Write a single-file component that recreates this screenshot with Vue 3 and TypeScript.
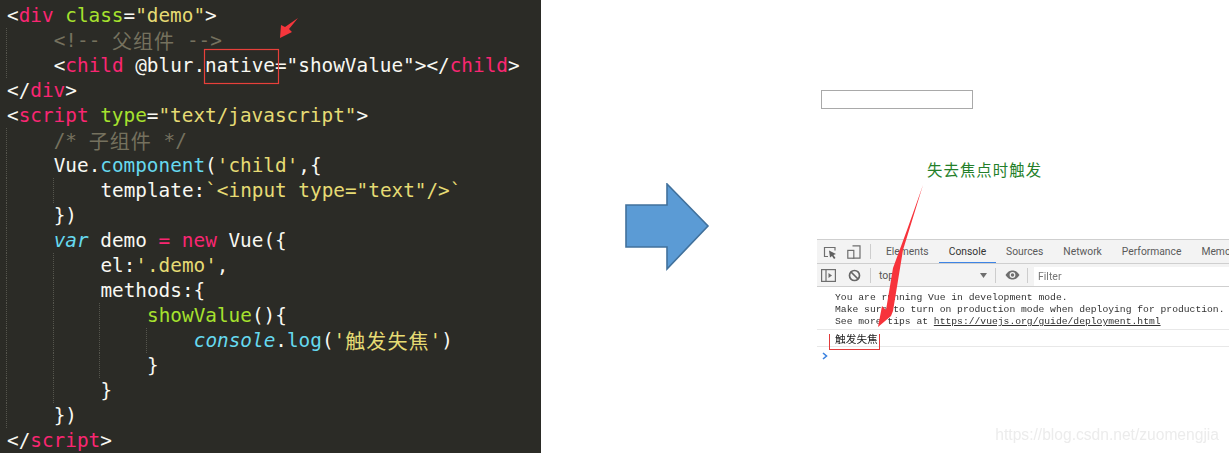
<script setup lang="ts">
type Token = [string, string?];
interface CodeLine { guides: boolean[]; tokens: Token[] }

const p = 'punct', t = 'tag', a = 'attr', s = 'str', c = 'comment', f = 'fn', i = 'ital';

const lines: CodeLine[] = [
  { guides: [], tokens: [['<', p], ['div', t], [' '], ['class', a], ['=', p], ['"demo"', s], ['>', p]] },
  { guides: [true], tokens: [['<!-- ', c], ['父组件', c + ' cjk'], [' -->', c]] },
  { guides: [true], tokens: [['<', p], ['child', t], [' @blur.native="showValue"', p], ['>', p], ['</', p], ['child', t], ['>', p]] },
  { guides: [], tokens: [['</', p], ['div', t], ['>', p]] },
  { guides: [], tokens: [['<', p], ['script', t], [' '], ['type', a], ['=', p], ['"text/javascript"', s], ['>', p]] },
  { guides: [true], tokens: [['/* ', c], ['子组件', c + ' cjk'], [' */', c]] },
  { guides: [true], tokens: [['Vue.', p], ['component', f], ['(', p], ["'child'", s], [',{', p]] },
  { guides: [true, true], tokens: [['template:', p], ['`<input type="text"/>`', s]] },
  { guides: [true], tokens: [['})', p]] },
  { guides: [true], tokens: [['var', i], [' demo ', p], ['=', t], [' '], ['new', t], [' Vue({', p]] },
  { guides: [true, true], tokens: [['el:', p], ["'.demo'", s], [',', p]] },
  { guides: [true, true], tokens: [['methods:{', p]] },
  { guides: [true, true, true], tokens: [['showValue', a], ['(){', p]] },
  { guides: [true, true, true, true], tokens: [['console', i], ['.', p], ['log', f], ['(', p], ["'", s], ['触发失焦', s + ' cjk'], ["'", s], [')', p]] },
  { guides: [true, true, true], tokens: [['}', p]] },
  { guides: [true, true], tokens: [['}', p]] },
  { guides: [true], tokens: [['})', p]] },
  { guides: [], tokens: [['</', p], ['script', t], ['>', p]] },
];

const tabs = ['Elements', 'Console', 'Sources', 'Network', 'Performance', 'Memo'];
</script>

<template>
  <div class="shot">
    <section class="editor">
      <div v-for="(line, n) in lines" :key="n" class="code-line">
        <span v-for="(g, m) in line.guides" :key="m" class="indent"></span>
        <span v-for="(tok, m) in line.tokens" :key="m" :class="tok[1]">{{ tok[0] }}</span>
      </div>
    </section>

    <div class="middle">
      <svg class="big-arrow" width="86" height="89" viewBox="0 0 86 89">
        <path d="M1 22H42V1L83 43 42 86V64H1Z" fill="#5b9bd5" stroke="#41719c" stroke-width="1.6" />
      </svg>
    </div>

    <section class="page">
      <div class="fake-input"></div>
      <div class="note">失去焦点时触发</div>
      <div class="devtools">
        <div class="tabbar">
          <svg class="ic-inspect" width="14" height="14" viewBox="0 0 14 14">
            <path d="M5 11.5H1.5V2.5H12V5.5" fill="none" stroke="#6e6e6e" stroke-width="1.2" />
            <path d="M6 5.5L13 9 10.4 10 12.5 13 11 14 9 11 7 12.5Z" fill="#5f5f5f" />
          </svg>
          <svg class="ic-device" width="14" height="14" viewBox="0 0 14 14">
            <path d="M5.5 .8H13V13.2H5.5M5.5 3" fill="none" stroke="#6e6e6e" stroke-width="1.2" />
            <rect x=".8" y="5.4" width="6" height="7.8" fill="#f3f3f3" stroke="#6e6e6e" stroke-width="1.2" />
          </svg>
          <span class="sep tab-sep"></span>
          <span v-for="tab in tabs" :key="tab" class="tab" :class="{ active: tab === 'Console' }">{{ tab }}</span>
        </div>
        <div class="toolbar">
          <svg class="ic-side" width="15" height="13" viewBox="0 0 15 13">
            <rect x=".6" y=".6" width="13.8" height="11.8" fill="none" stroke="#6e6e6e" stroke-width="1.2" />
            <path d="M5 1V12" stroke="#6e6e6e" stroke-width="1.2" />
            <path d="M7.5 4L11 6.5 7.5 9Z" fill="#6e6e6e" />
          </svg>
          <svg class="ic-block" width="13" height="13" viewBox="0 0 13 13">
            <circle cx="6.5" cy="6.5" r="5" fill="none" stroke="#666" stroke-width="1.7" />
            <path d="M3 3L10 10" stroke="#666" stroke-width="1.7" />
          </svg>
          <span class="sep"></span>
          <span class="context">top</span>
          <svg class="caret" width="7" height="5" viewBox="0 0 7 5"><path d="M0 0H7L3.5 5Z" fill="#6e6e6e" /></svg>
          <span class="sep sep-b"></span>
          <svg class="ic-eye" width="15" height="10" viewBox="0 0 15 10">
            <path d="M.5 5C3 1.3 5 .5 7.5 .5S12 1.3 14.5 5C12 8.7 10 9.5 7.5 9.5S3 8.7 .5 5Z" fill="#6e6e6e" />
            <circle cx="7.5" cy="5" r="2.9" fill="#f3f3f3" />
            <circle cx="7.5" cy="5" r="1.7" fill="#6e6e6e" />
          </svg>
          <span class="sep sep-c"></span>
          <span class="filter">Filter</span>
        </div>
        <div class="logs">
          <div>You are running Vue in development mode.</div>
          <div>Make sure to turn on production mode when deploying for production.</div>
          <div>See more tips at <span class="link">https://vuejs.org/guide/deployment.html</span></div>
        </div>
        <div class="message"><span class="msg-text">触发失焦</span></div>
        <svg class="prompt" width="6" height="8" viewBox="0 0 6 8"><path d="M1 1L4.5 4 1 7" fill="none" stroke="#3b82e0" stroke-width="1.6" /></svg>
      </div>
    </section>

    <svg class="overlay" width="1229" height="453" viewBox="0 0 1229 453">
      <rect x="204.5" y="49.5" width="74" height="34" fill="none" stroke="#e8403a" stroke-width="1.2" />
      <path d="M298 18L289 29 292 32 280 38 281 25 285 27Z" fill="#f5363c" />
      <path d="M923 185L903 250 893 311 891 316 878 327 882 306 886 310 893 268 907 230Z" fill="#f7333b" />
    </svg>
    <div class="watermark">https://blog.csdn.net/zuomengjia</div>
  </div>
</template>

<style>
html, body { margin: 0; background: #fff; }
</style>

<style scoped>
.shot {
  position: relative;
  display: flex;
  width: 1229px;
  height: 453px;
  overflow: hidden;
  background: #fff;
}
.editor {
  box-sizing: border-box;
  flex: 0 0 541px;
  height: 453px;
  padding: 2.5px 0 0 6px;
  background: #2b2b26;
  font-family: "DejaVu Sans Mono", monospace;
  font-size: 19.35px;
  color: #f8f8f2;
}
.code-line { display: flex; height: 25.05px; line-height: 25.05px; white-space: pre; padding-left: 1px; }
.indent { flex: 0 0 46.7px; box-sizing: border-box; margin-left: -1px; margin-right: 1px; border-left: 1px dotted #55554d; }
.punct { color: #f8f8f2; }
.tag { color: #f92672; }
.attr { color: #a6e22e; }
.str { color: #e6db74; }
.comment { color: #75715e; }
.fn { color: #66d9ef; }
.ital { color: #66d9ef; font-style: italic; }
.cjk { font-family: "Noto Sans CJK SC", sans-serif; font-size: 20px; letter-spacing: 1.1px; }

.middle { flex: 0 0 276px; padding: 183px 0 0 84px; box-sizing: border-box; }
.big-arrow { display: block; }

.page { flex: 1; min-width: 0; padding-top: 90px; overflow: hidden; }
.fake-input { box-sizing: border-box; width: 152px; height: 19px; margin-left: 4px; border: 1px solid #a9a9a9; }
.note {
  margin: 49px 0 0 110px;
  height: 22px;
  line-height: 22px;
  font-family: "Noto Sans CJK SC", sans-serif;
  font-size: 15.4px;
  font-weight: 400;
  letter-spacing: 1.05px;
  color: #247f2a;
  white-space: nowrap;
}
.devtools {
  margin-top: 59px;
  height: 130px;
  border-top: 1px solid #cfcfcf;
  font-family: Roboto, sans-serif;
  filter: blur(0.5px);
}
.tabbar {
  display: flex;
  align-items: center;
  height: 23px;
  background: #f3f3f3;
  border-bottom: 1px solid #cfcfcf;
  white-space: nowrap;
  overflow: hidden;
}
.tabbar svg, .toolbar svg { flex: none; }
.ic-inspect { margin-left: 6px; }
.ic-device { margin-left: 10px; }
.sep { flex: none; width: 1px; height: 15px; background: #cdcdcd; }
.tab-sep { margin: 0 5px 0 9px; }
.tab {
  flex: none;
  box-sizing: border-box;
  height: 23px;
  line-height: 24px;
  padding: 0 10px;
  font-size: 10.3px;
  color: #5a5a5a;
}
.tab:last-child { padding-right: 0; }
.tab.active { color: #333; border-bottom: 1.5px solid #3d84e5; }
.toolbar {
  display: flex;
  align-items: center;
  height: 22px;
  background: #f3f3f3;
  border-bottom: 1px solid #cfcfcf;
  font-size: 10.5px;
  color: #555;
}
.ic-side { margin-left: 4px; }
.ic-block { margin: 0 9px 0 12px; }
.context { flex: none; margin-left: 8px; width: 101px; }
.caret { margin-right: 8px; }
.sep-b { margin-right: 9px; }
.ic-eye { margin-right: 7px; }
.sep-c { margin-right: 6px; }
.filter {
  flex: 1;
  align-self: stretch;
  margin: 3px 0 0;
  padding-left: 4px;
  line-height: 19px;
  background: #fff;
  color: #777;
}
.logs {
  padding: 5px 0 0 18px;
  height: 37px;
  font-family: "Liberation Mono", monospace;
  font-size: 9.7px;
  line-height: 12px;
  color: #333;
  white-space: pre;
}
.link { text-decoration: underline; }
.message {
  position: relative;
  height: 16px;
  line-height: 18px;
  padding-left: 18px;
  border-top: 1px solid #e8e8e8;
  border-bottom: 1px solid #e8e8e8;
  font-family: "Noto Sans CJK SC", sans-serif;
  font-size: 10.7px;
  color: #222;
}
.prompt { display: block; margin: 5px 0 0 5px; }

.overlay { position: absolute; left: 0; top: 0; pointer-events: none; }
.message::after {
  content: "";
  position: absolute;
  left: 12px;
  top: 4px;
  width: 49px;
  height: 15px;
  border: 1px solid #e23b3b;
  border-top: 0;
}
.watermark {
  position: absolute;
  right: 10px;
  top: 425px;
  font-family: "Liberation Sans", sans-serif;
  font-size: 15.6px;
  line-height: 20px;
  color: #ececec;
  white-space: nowrap;
}
</style>
